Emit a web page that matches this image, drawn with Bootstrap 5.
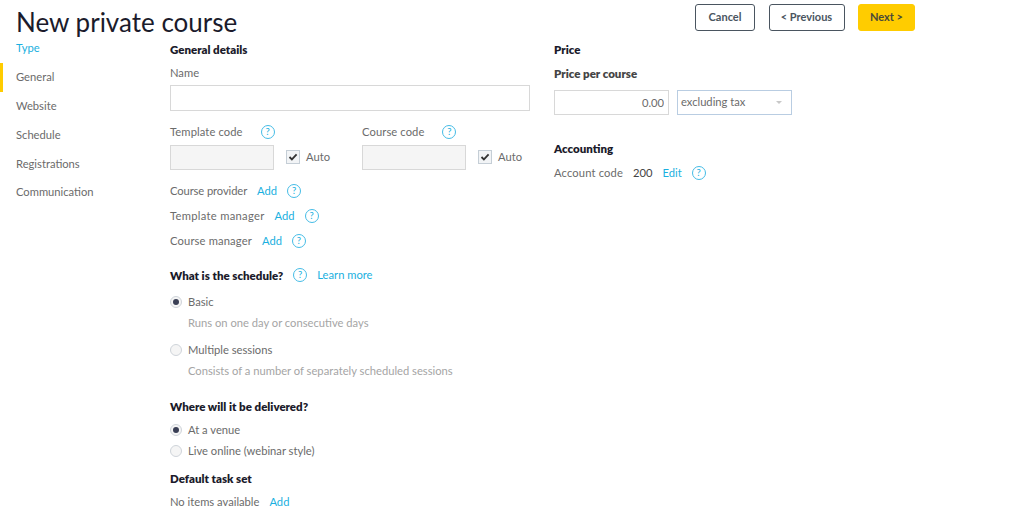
<!DOCTYPE html>
<html lang="en">
<head>
  <meta charset="UTF-8">
  <title>New private course</title>
  <meta name="viewport" content="width=device-width, initial-scale=1">
  <link href="https://cdn.jsdelivr.net/npm/bootstrap@5.3.0/dist/css/bootstrap.min.css" rel="stylesheet">
  <style>
    body { font-family: Lato, "Open Sans", sans-serif; font-size: 11.2px; color: #6b6b6b; background: #fff; height: 526px; overflow: hidden; }
    .page-head { height: 34px; padding-left: 16px; width: 915px; }
    .page-title { font-size: 26px; font-weight: 400; color: #1b1b2b; margin: 0; line-height: 44px; }
    .head-actions { gap: 13.5px; padding-top: 4px; }
    .head-btn { font-size: 11px; font-weight: 700; height: 27px; padding: 0; border: 1px solid #4a5560; border-radius: 3px; color: #4a5560; background: #fff; }
    .btn-cancel { width: 60px; }
    .btn-prev { width: 76px; }
    .btn-next { width: 57px; background: #ffcc00; border-color: #ffcc00; color: #4a4a3a; }
    .side-nav { width: 170px; flex: none; padding-top: .4px; }
    .side-link { display: block; height: 28.8px; line-height: 28.8px; padding-left: 16px; color: #6b6b6b; text-decoration: none; }
    .side-link.is-done { color: #1ab0e0; }
    .side-link.is-active { box-shadow: inset 3px 0 0 #ffcc00; }
    .mid-col { width: 384px; flex: none; padding-top: 7px; }
    .right-col { width: 300px; flex: none; padding-top: 7px; }
    .sect-head { font-weight: 800; font-size: 11.5px; color: #1b1b2b; line-height: 18px; margin-bottom: -2px; }
    .sect-head.is-soft { color: #444; }
    .rowline { line-height: 16px; height: 16px; gap: 10px; }
    .add-link { color: #1ab0e0; text-decoration: none; }
    .help-dot { width: 14px; height: 14px; border: 1px solid #45bce6; border-radius: 50%; color: #1ab0e0; font-size: 9.5px; line-height: 12px; text-align: center; display: inline-block; flex: none; }
    .help-far { margin-left: 8px; }
    .box-input { border: 1px solid #d8d8d8; height: 26px; background: #fff; border-radius: 0; padding: 0 4px; font-size: 11.2px; color: #6b6b6b; }
    .box-input:focus { outline: 0; }
    .box-name { width: 360px; }
    .box-code { width: 104px; height: 25px; background: #f5f5f5; }
    .code-group { width: 192px; }
    .auto-box { gap: 6px; margin-left: 12px; }
    .fake-check { width: 14px; height: 14px; border: 1px solid #c5ced6; background: #f2f4f6; display: inline-flex; align-items: center; justify-content: center; }
    .radio-line { gap: 6px; }
    .fake-radio { width: 12px; height: 12px; border: 1px solid #cfd4da; border-radius: 50%; background: #f5f5f5; display: inline-flex; align-items: center; justify-content: center; flex: none; }
    .fake-radio.is-on::after { content: ""; width: 6px; height: 6px; border-radius: 50%; background: #3a3f55; }
    .hint-text { color: #a5a5a5; padding-left: 18px; line-height: 16px; }
    .price-input { width: 115px; height: 25px; text-align: right; }
    .tax-select { width: 115px; height: 25px; border: 1px solid #b9cde2; padding: 0 3px; margin-left: 8px; }
    .tax-caret { width: 0; height: 0; border-left: 3px solid transparent; border-right: 3px solid transparent; border-top: 3px solid #c8c8c8; margin-right: 6px; }
    .val-dark { color: #444; }
    .track-tight { letter-spacing: -.1px; }
    .track-a { letter-spacing: .1px; }
    .track-b { letter-spacing: .15px; }
    .track-c { letter-spacing: .3px; }
    .sp-4 { margin-top: 4px; }
    .sp-5 { margin-top: 5px; }
    .sp-8 { margin-top: 8px; }
    .sp-9 { margin-top: 9px; }
    .sp-11 { margin-top: 11px; }
    .sp-13 { margin-top: 13px; }
    .sp-18 { margin-top: 18px; }
    .sp-19 { margin-top: 19px; }
    .sp-25 { margin-top: 25px; }
  </style>
</head>
<body>
  <div class="page-head d-flex justify-content-between">
    <h1 class="page-title">New private course</h1>
    <div class="head-actions d-flex">
      <button type="button" class="btn head-btn btn-cancel">Cancel</button>
      <button type="button" class="btn head-btn btn-prev">&lt; Previous</button>
      <button type="button" class="btn head-btn btn-next">Next &gt;</button>
    </div>
  </div>

  <div class="d-flex">
    <nav class="side-nav">
      <a class="side-link is-done" href="#">Type</a>
      <a class="side-link is-active" href="#">General</a>
      <a class="side-link" href="#">Website</a>
      <a class="side-link" href="#">Schedule</a>
      <a class="side-link" href="#">Registrations</a>
      <a class="side-link" href="#">Communication</a>
    </nav>

    <div class="mid-col">
      <div class="sect-head">General details</div>
      <div class="rowline sp-8">Name</div>
      <input type="text" class="box-input box-name d-block sp-4">

      <div class="d-flex sp-13">
        <div class="code-group">
          <div class="d-flex align-items-center rowline track-a">Template code <span class="help-dot help-far">?</span></div>
          <div class="d-flex align-items-center sp-5">
            <input type="text" class="box-input box-code" disabled>
            <span class="d-flex align-items-center auto-box">
              <span class="fake-check"><svg width="10" height="10" viewBox="0 0 10 10"><path d="M1.5 5l2.4 2.4L8.6 2.4" fill="none" stroke="#333" stroke-width="1.8"/></svg></span>Auto
            </span>
          </div>
        </div>
        <div class="code-group">
          <div class="d-flex align-items-center rowline track-a">Course code <span class="help-dot help-far">?</span></div>
          <div class="d-flex align-items-center sp-5">
            <input type="text" class="box-input box-code" disabled>
            <span class="d-flex align-items-center auto-box">
              <span class="fake-check"><svg width="10" height="10" viewBox="0 0 10 10"><path d="M1.5 5l2.4 2.4L8.6 2.4" fill="none" stroke="#333" stroke-width="1.8"/></svg></span>Auto
            </span>
          </div>
        </div>
      </div>

      <div class="d-flex align-items-center rowline sp-13"><span class="track-tight">Course provider</span> <a class="add-link" href="#">Add</a> <span class="help-dot">?</span></div>
      <div class="d-flex align-items-center rowline sp-9"><span class="track-c">Template manager</span> <a class="add-link" href="#">Add</a> <span class="help-dot">?</span></div>
      <div class="d-flex align-items-center rowline sp-9"><span class="track-b">Course manager</span> <a class="add-link" href="#">Add</a> <span class="help-dot">?</span></div>

      <div class="d-flex align-items-center rowline sp-18">
        <span class="sect-head">What is the schedule?</span> <span class="help-dot">?</span> <a class="add-link" href="#">Learn more</a>
      </div>
      <div class="d-flex align-items-center rowline radio-line sp-11"><span class="fake-radio is-on"></span>Basic</div>
      <div class="hint-text sp-5">Runs on one day or consecutive days</div>
      <div class="d-flex align-items-center rowline radio-line sp-11"><span class="fake-radio"></span>Multiple sessions</div>
      <div class="hint-text sp-5">Consists of a number of separately scheduled sessions</div>

      <div class="sect-head sp-19">Where will it be delivered?</div>
      <div class="d-flex align-items-center rowline radio-line sp-8"><span class="fake-radio is-on"></span>At a venue</div>
      <div class="d-flex align-items-center rowline radio-line sp-5"><span class="fake-radio"></span>Live online (webinar style)</div>
      <div class="sect-head sp-11">Default task set</div>
      <div class="d-flex align-items-center rowline sp-8">No items available <a class="add-link" href="#">Add</a></div>
    </div>

    <div class="right-col">
      <div class="sect-head">Price</div>
      <div class="sect-head is-soft sp-8">Price per course</div>
      <div class="d-flex sp-9">
        <input type="text" class="box-input price-input" value="0.00">
        <div class="tax-select d-flex justify-content-between align-items-center">excluding tax <span class="tax-caret"></span></div>
      </div>
      <div class="sect-head sp-25">Accounting</div>
      <div class="d-flex align-items-center rowline sp-9"><span class="track-b">Account code</span> <span class="val-dark">200</span> <a class="add-link" href="#">Edit</a> <span class="help-dot">?</span></div>
    </div>
  </div>

  <script src="https://cdn.jsdelivr.net/npm/bootstrap@5.3.0/dist/js/bootstrap.bundle.min.js"></script>
</body>
</html>
